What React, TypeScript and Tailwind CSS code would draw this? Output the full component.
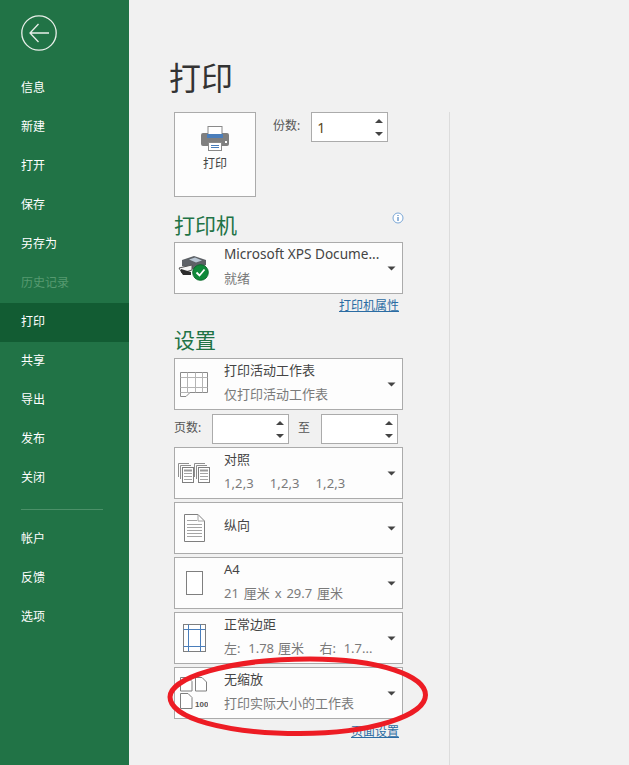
import React from "react";

const FONT = "font-['Noto_Sans','Noto_Sans_CJK_SC',sans-serif]";

function Caret() {
  return (
    <svg width="9" height="5" viewBox="0 0 9 5" className="shrink-0">
      <path d="M0.500 0.500H8.500L4.500 4.500Z" fill="#444" />
    </svg>
  );
}

function Spinner() {
  return (
    <div className="mr-[4px] flex h-full w-[8px] flex-col items-center justify-center gap-[9px]">
      <svg width="8" height="4" viewBox="0 0 8 4"><path d="M0 4H8L4 0Z" fill="#444" /></svg>
      <svg width="8" height="4" viewBox="0 0 8 4"><path d="M0 0H8L4 4Z" fill="#444" /></svg>
    </div>
  );
}

function NumberBox({ value, className }: { value?: string; className: string }) {
  return (
    <div className={`flex h-[30px] w-[77px] items-center justify-between border border-[#ababab] bg-white ${className}`}>
      <span className="pl-[5px] text-[14px] text-[#5a4a20]">{value}</span>
      <Spinner />
    </div>
  );
}

function Combo({ icon, title, sub, titleClass }: { icon: React.ReactNode; title: string; sub?: React.ReactNode; titleClass?: string }) {
  return (
    <div className="flex h-[52px] w-[229px] items-center border border-[#ababab] bg-[#fdfdfd]">
      <div className="mr-[11px] flex h-full w-[38px] shrink-0 items-center justify-center">{icon}</div>
      <div className={`flex h-full min-w-0 flex-1 flex-col ${sub ? "justify-between pb-[4px]" : "justify-center pb-[6px]"}`}>
        <div className={`whitespace-nowrap leading-[22px] text-[#444] ${titleClass ?? "text-[13px]"}`}>{title}</div>
        {sub && <div className="whitespace-pre text-[13px] leading-[22px] text-[#7a7a7a]">{sub}</div>}
      </div>
      <div className="mr-[6px] flex items-center"><Caret /></div>
    </div>
  );
}

const PrinterBig = () => (
  <svg width="28" height="25" viewBox="0 0 28 25">
    <rect x="7" y="0.500" width="14" height="9" fill="#fff" stroke="#8a8a8a" />
    <path d="M2 7H7V10H21V7H26A2 2 0 0 1 28 9V18A2 2 0 0 1 26 20H2A2 2 0 0 1 0 18V9A2 2 0 0 1 2 7Z" fill="#7f7f7f" />
    <rect x="6" y="8" width="16" height="4" fill="#4a7ebb" />
    <rect x="7.500" y="16.500" width="13" height="8" fill="#fff" stroke="#8a8a8a" />
    <path d="M10 19.500H18M10 21.500H18" stroke="#4a7ebb" />
    <rect x="24" y="15" width="2" height="2" fill="#fff" />
  </svg>
);

const PrinterStatus = () => (
  <svg width="32" height="26" viewBox="0 0 32 26">
    <path d="M4 5L16 1L28 5L28 10L18 15L4 11Z" fill="#5d6166" />
    <path d="M11 4.500L17 2.500L24 5.500L18 7.500Z" fill="#b9c6d3" />
    <path d="M1 13L14 10L14 15L4 18Z" fill="#f5f5f5" stroke="#555" strokeWidth="1" />
    <path d="M3 14L13 17L13 20L5 20L3 17Z" fill="#2d2d2d" />
    <circle cx="22.500" cy="17.500" r="7.800" fill="#0f8a3a" stroke="#0b6a2c" />
    <path d="M18.500 17.500L21.500 20.500L26.500 14.500" stroke="#fff" strokeWidth="1.800" fill="none" />
  </svg>
);

const SheetIcon = () => (
  <svg width="28" height="25" viewBox="0 0 28 25">
    <path d="M0.500 0.500H27.500V20.500H10L6 24.500H0.500Z" fill="#fff" stroke="#8a8a8a" />
    <path d="M0.500 5.500H27.500M0.500 15.500H27.500M0.500 20.500H10M7.500 0.500V20.500M15.500 0.500V20.500M22.500 0.500V20.500" stroke="#b5b5b5" fill="none" />
  </svg>
);

const Stack = ({ x }: { x: number }) => (
  <g transform={`translate(${x} 0)`}>
    <path d="M0.500 14V0.500H11M2.500 16V2.500H13" fill="none" stroke="#8f8f8f" />
    <rect x="4.500" y="4.500" width="11" height="15" fill="#fff" stroke="#7f7f7f" />
    <rect x="6" y="6.500" width="8" height="2" fill="#9a9a9a" />
    <path d="M6 10.500H14M6 13.500H14M6 16.500H14" stroke="#a5a5a5" />
  </g>
);

const CollateIcon = () => (
  <svg width="32" height="20" viewBox="0 0 32 20">
    <Stack x={0} />
    <Stack x={16} />
  </svg>
);

const PortraitIcon = () => (
  <svg width="21" height="28" viewBox="0 0 21 28">
    <path d="M0.500 0.500H14L20.500 7V27.500H0.500Z" fill="#fff" stroke="#7f7f7f" />
    <path d="M14 0.500V7H20.500" fill="none" stroke="#a5a5a5" />
    <path d="M3 6.500H13M3 10.500H18M3 13.500H18M3 16.500H18M3 19.500H18M3 22.500H18" stroke="#a5a5a5" />
  </svg>
);

const PaperIcon = () => (
  <svg width="17" height="24" viewBox="0 0 17 24">
    <rect x="0.500" y="0.500" width="16" height="23" fill="#fff" stroke="#7f7f7f" />
  </svg>
);

const MarginIcon = () => (
  <svg width="23" height="28" viewBox="0 0 23 28">
    <rect x="0.500" y="0.500" width="22" height="27" fill="#fff" stroke="#7f7f7f" />
    <path d="M5.500 0.500V27.500M17.500 0.500V27.500M0.500 5.500H22.500M0.500 22.500H22.500" stroke="#4a7ebb" fill="none" />
  </svg>
);

const ScaleIcon = () => (
  <svg width="28" height="32" viewBox="0 0 28 32">
    <g fill="#fff" stroke="#7f7f7f">
      <path d="M0.500 0.500H8L12 4.500V14H0.500Z" />
      <path d="M15.500 0.500H22L26.500 5V14H15.500Z" />
      <path d="M0.500 16.500H8L12 20.500V31.500H0.500Z" />
    </g>
    <text x="15" y="30" fontSize="8" fontWeight="700" fill="#555" fontFamily="'Liberation Sans',sans-serif">100</text>
  </svg>
);

const NAV_TOP = ["信息", "新建", "打开", "保存", "另存为", "历史记录", "打印", "共享", "导出", "发布", "关闭"];
const NAV_BOTTOM = ["帐户", "反馈", "选项"];

function NavItem({ label }: { label: string }) {
  const active = label === "打印";
  const disabled = label === "历史记录";
  return (
    <div
      className={`flex h-[39px] items-center pl-[21px] pb-[2px] text-[12px] ${
        active ? "bg-[#125c33] text-white" : disabled ? "text-[#569a70]" : "text-white"
      }`}
    >
      {label}
    </div>
  );
}

export default function App() {
  return (
    <div className={`relative flex h-[765px] w-[629px] overflow-hidden bg-[#f1f1f1] ${FONT}`}>
      <aside className="flex w-[129px] shrink-0 flex-col bg-[#217346]">
        <div className="flex h-[69px] shrink-0 items-start pl-[21px] pt-[15px]">
          <svg width="36" height="36" viewBox="0 0 36 36" fill="none" stroke="#e8efe9">
            <circle cx="18" cy="18" r="17.200" strokeWidth="1.300" />
            <path d="M9 18H28M17.500 9L9 18L17.500 27" strokeWidth="1.300" />
          </svg>
        </div>
        {NAV_TOP.map((l) => (
          <NavItem key={l} label={l} />
        ))}
        <div className="ml-[21px] mt-[11px] mb-[10px] h-px w-[82px] shrink-0 bg-[#4b9068]" />
        {NAV_BOTTOM.map((l) => (
          <NavItem key={l} label={l} />
        ))}
      </aside>

      <main className="flex min-w-0 flex-1 flex-col">
        <h1 className="h-[112px] shrink-0 pl-[40px] pt-[53px] text-[32px] leading-[50px] font-normal text-[#333]">打印</h1>
        <div className="flex min-h-0 flex-1">
          <div className="ml-[45px] flex w-[229px] shrink-0 flex-col">
            <div className="flex h-[85px] items-start">
              <div className="flex h-[85px] w-[82px] flex-col items-center border border-[#ababab] bg-[#fdfdfd] pt-[13px]">
                <PrinterBig />
                <span className="mt-[4px] text-[12px] leading-[18px] text-[#444]">打印</span>
              </div>
              <span className="ml-[17px] mt-[5px] text-[12px] leading-[18px] text-[#555]">份数:</span>
              <NumberBox value="1" className="ml-[11px]" />
            </div>

            <div className="relative flex h-[45px] items-end justify-between pb-[2px]">
              <h2 className="text-[21px] leading-[30px] font-normal text-[#217346]">打印机</h2>
              <svg width="12" height="12" viewBox="0 0 12 12" className="mr-[-1px] mb-[16px]">
                <circle cx="6" cy="6" r="5" fill="#fff" stroke="#7ba7d6" />
                <path d="M6 3V4M6 5V9" stroke="#2f6fb5" />
              </svg>
            </div>
            <Combo
              icon={<PrinterStatus />}
              title="Microsoft XPS Docume..."
              titleClass="text-[13.6px]"
              sub="就绪"
            />
            <div className="flex h-[22px] justify-end pr-[4px] pt-[3px]">
              <span className="text-[12px] leading-[18px] text-[#2b6ca3] underline">打印机属性</span>
            </div>
            <h2 className="flex h-[42px] items-end pb-[3px] text-[21px] leading-[30px] font-normal text-[#217346]">设置</h2>
            <Combo icon={<SheetIcon />} title="打印活动工作表" sub="仅打印活动工作表" />
            <div className="mt-[4px] mb-[3px] flex h-[30px] items-center text-[12px] text-[#555]">
              <span className="w-[38px] shrink-0 whitespace-nowrap leading-[18px] pb-[2px]">页数:</span>
              <NumberBox className="" />
              <span className="w-[32px] shrink-0 pb-[2px] pr-[2px] text-center leading-[18px]">至</span>
              <NumberBox className="" />
            </div>
            <div className="flex flex-col gap-[3px]">
              <Combo
                icon={<CollateIcon />}
                title="对照"
                sub={
                  <span className="flex gap-[16px] tracking-[0.1px]">
                    <span>1,2,3</span>
                    <span>1,2,3</span>
                    <span>1,2,3</span>
                  </span>
                }
              />
              <Combo icon={<PortraitIcon />} title="纵向" />
              <Combo icon={<PaperIcon />} title="A4" sub={<span className="[word-spacing:1.500px]">21 厘米 x 29.7 厘米</span>} />
              <Combo icon={<MarginIcon />} title="正常边距" sub={<span className="[word-spacing:0.500px]">{"左:  1.78 厘米    右:  1.7..."}</span>} />
              <Combo icon={<ScaleIcon />} title="无缩放" sub="打印实际大小的工作表" />
            </div>
            <div className="flex justify-end pr-[4px] pt-[4px]">
              <span className="text-[12px] leading-[18px] text-[#2b6ca3] underline">页面设置</span>
            </div>
          </div>
          <div className="ml-[46px] h-full w-px shrink-0 bg-[#dcdcdc]" />
        </div>
      </main>

      <svg width="629" height="765" viewBox="0 0 629 765" className="pointer-events-none absolute left-0 top-0">
        <path
          d="M170 697C170 678 228 659 310 659C380 659 425.500 676 425.500 695C425.500 716 370 733.500 300 733.500C225 733.500 170 718 170 697Z"
          fill="none"
          stroke="#ed1c24"
          strokeWidth="5"
        />
      </svg>
    </div>
  );
}
